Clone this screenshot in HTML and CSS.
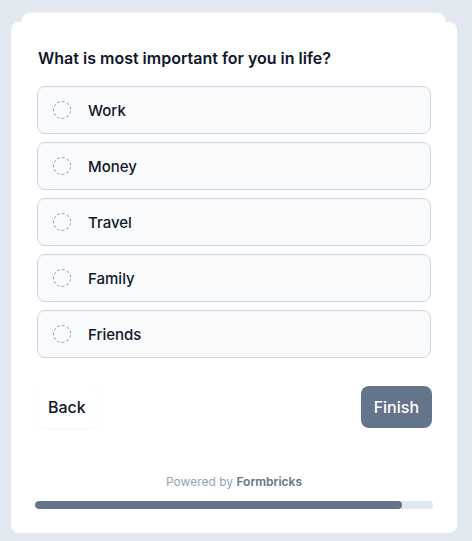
FILE: index.html
```html
<!DOCTYPE html>
<html>
<head>
<meta charset="utf-8">
<link rel="stylesheet" href="styles.css">
</head>
<body>
<div class="stack">
  <div class="back-card"></div>
  <div class="card">
    <h1 class="question">What is most important for you in life?</h1>
    <div class="options">
      <label class="option"><span class="radio"></span><span class="label">Work</span></label>
      <label class="option"><span class="radio"></span><span class="label">Money</span></label>
      <label class="option"><span class="radio"></span><span class="label">Travel</span></label>
      <label class="option"><span class="radio"></span><span class="label">Family</span></label>
      <label class="option"><span class="radio"></span><span class="label">Friends</span></label>
    </div>
    <div class="actions">
      <button class="btn-back">Back</button>
      <button class="btn-finish">Finish</button>
    </div>
    <div class="powered">Powered by <b>Formbricks</b></div>
    <div class="progress"><div class="progress-fill" style="width:92.2%"></div></div>
  </div>
</div>
</body>
</html>
```
FILE: styles.css
```css
html, body {
  margin: 0;
  padding: 0;
  background: #e2e8f0;
  font-family: Inter, "Liberation Sans", sans-serif;
}
.stack {
  padding: 13px 15px 9px 11px;
  display: flex;
  flex-direction: column;
  align-items: center;
}
.back-card {
  width: 423px;
  height: 12px;
  margin-left: -2px;
  background: #fff;
  border-radius: 8px 8px 0 0;
  margin-bottom: -3px;
  box-shadow: 0 0 0 1px #eef1f5;
}
.card {
  position: relative;
  width: 446px;
  box-sizing: border-box;
  background: #fff;
  border-radius: 8px;
  padding: 24px 26px 24px 26px;
}
.question {
  margin: 0 0 16px 1px;
  font-size: 16px;
  line-height: 24px;
  font-weight: 600;
  color: #0f172a;
}
.options {
  display: flex;
  flex-direction: column;
  gap: 8px;
}
.option {
  display: flex;
  align-items: center;
  height: 48px;
  box-sizing: border-box;
  border: 1px solid #cbd5e1;
  border-radius: 8px;
  background: #f8fafc;
  padding-left: 15px;
}
.radio {
  width: 18px;
  height: 18px;
  box-sizing: border-box;
  border: 1px dashed #8b95a7;
  border-radius: 50%;
  flex: none;
}
.label {
  margin-left: 17px;
  font-size: 15px;
  font-weight: 500;
  color: #0f172a;
}
.actions {
  display: flex;
  justify-content: space-between;
  align-items: center;
  margin-top: 28px;
}
.btn-back {
  font-family: inherit;
  font-size: 16px;
  font-weight: 500;
  color: #0f172a;
  background: #fff;
  border: none;
  border-radius: 8px;
  height: 42px;
  padding: 0 11px;
  box-shadow: 0 1px 1px rgba(15, 23, 42, 0.04);
}
.btn-finish {
  font-family: inherit;
  font-size: 16px;
  font-weight: 500;
  color: #fff;
  background: #64748b;
  border: none;
  border-radius: 8px;
  height: 42px;
  padding: 0 13px;
  margin-right: -1px;
}
.powered {
  margin-top: 46px;
  text-align: center;
  font-size: 12px;
  line-height: 16px;
  color: #94a3b8;
}
.powered b {
  color: #64748b;
  font-weight: 600;
}
.progress {
  margin: 11px -2px 0 -2px;
  height: 8px;
  background: #e2e8f0;
  border-radius: 4px;
  overflow: hidden;
}
.progress-fill {
  height: 100%;
  background: #64748b;
  border-radius: 4px;
}
```
